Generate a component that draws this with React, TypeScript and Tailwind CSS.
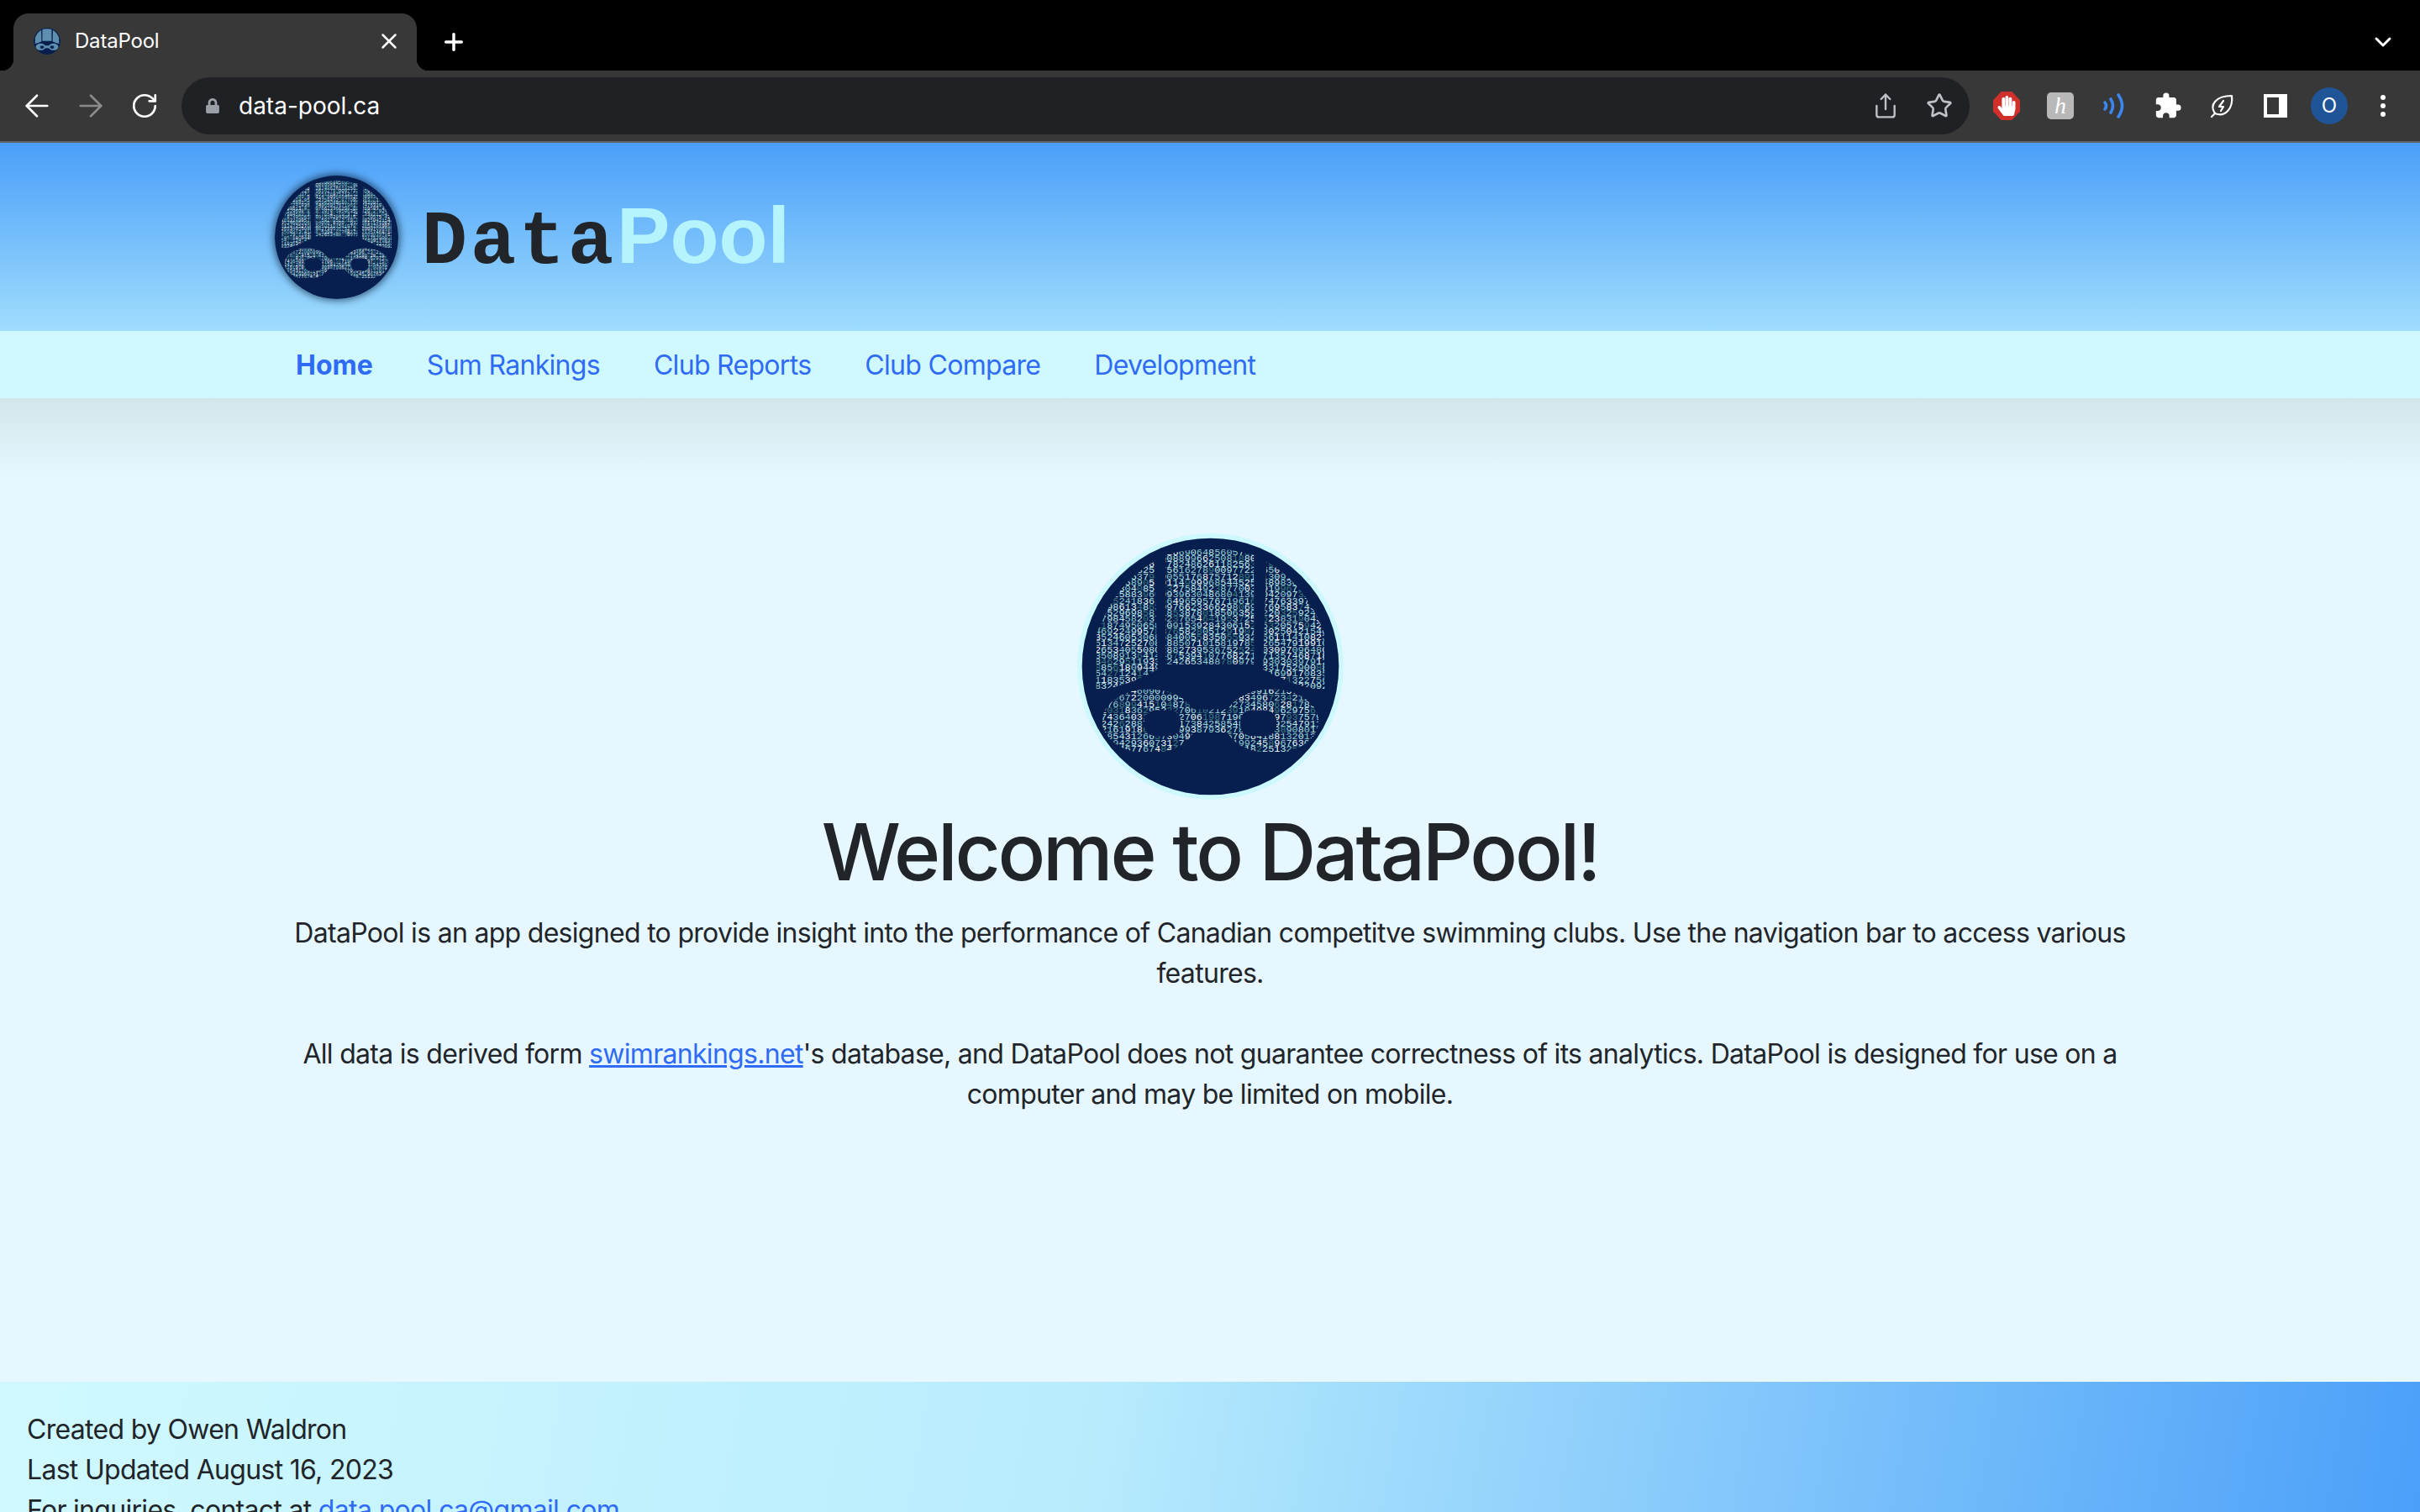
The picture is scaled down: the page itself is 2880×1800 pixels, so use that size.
import { ArrowLeft, ArrowRight, ChevronDown, Plus, RotateCw, Share, Star, X } from "lucide-react";
import { FaHandPaper, FaLock } from "react-icons/fa";
import { MdExtension } from "react-icons/md";

// digits of the logo, laid out on a fixed grid (units are 3x of the full size logo)
const COLORS = ["#f2ffff", "#bfeaea", "#93cfd1", "#3f7a80"];

function makeRows(top: number, step: number, count: number, seed: number) {
  let s = seed;
  const next = () => {
    s = (s * 1664525 + 1013904223) % 4294967296;
    return s / 4294967296;
  };
  const rows = [];
  for (let r = 0; r < count; r++) {
    const cells = [];
    for (let c = 0; c < 39; c++) {
      const v = next();
      const fill = v < 0.14 ? COLORS[0] : v < 0.55 ? COLORS[1] : v < 0.88 ? COLORS[2] : COLORS[3];
      cells.push({ d: String(Math.floor(next() * 10)), fill });
    }
    rows.push({ y: top + r * step, cells });
  }
  return rows;
}

const domeRows = makeRows(122, 21.7, 23, 77);
const goggleRows = makeRows(618, 23, 10, 1234);

function DigitRows({ rows }: { rows: ReturnType<typeof makeRows> }) {
  return (
    <>
      {rows.map((row) => (
        <text key={row.y} x={128} y={row.y} fontSize={35.5} fontFamily="'Liberation Mono', monospace">
          {row.cells.map((cell, i) => (
            <tspan key={i} fill={cell.fill}>
              {cell.d}
            </tspan>
          ))}
        </text>
      ))}
    </>
  );
}

function Logo({ id, ring = false, digits = true }: { id: string; ring?: boolean; digits?: boolean }) {
  const dome = (
    <>
      <path d="M340 145 Q200 225 135 400 L132 605 Q250 590 352 530 Z" />
      <path d="M380 122 Q540 78 695 122 L695 512 L380 512 Z" />
      <path d="M740 145 Q880 225 945 400 L948 605 Q830 590 728 530 Z" />
    </>
  );
  const goggles = (
    <>
      <ellipse cx={322} cy={715} rx={168} ry={115} />
      <ellipse cx={758} cy={715} rx={168} ry={115} />
      <rect x={430} y={672} width={220} height={86} />
    </>
  );
  return (
    <svg viewBox={ring ? "65 45 950 950" : "82 62 916 916"} className="block h-full w-full">
      <defs>
        <clipPath id={`${id}-dome`}>{dome}</clipPath>
        <clipPath id={`${id}-goggles`}>{goggles}</clipPath>
      </defs>
      {ring && <circle cx={540} cy={520} r={475} fill="#ccf9ff" />}
      <circle cx={540} cy={520} r={458} fill="#071f4e" />
      {digits ? (
        <>
          <g clipPath={`url(#${id}-dome)`}>
            <DigitRows rows={domeRows} />
          </g>
          <g clipPath={`url(#${id}-goggles)`}>
            <DigitRows rows={goggleRows} />
          </g>
        </>
      ) : (
        <g fill="#5f8fae">
          {dome}
          {goggles}
        </g>
      )}
      <rect x={304} y={676} width={130} height={92} rx={40} fill="#071f4e" />
      <rect x={646} y={676} width={130} height={92} rx={40} fill="#071f4e" />
    </svg>
  );
}

function ToolButton({ children }: { children: React.ReactNode }) {
  return <div className="flex h-[64px] w-[64px] shrink-0 items-center justify-center">{children}</div>;
}

function BrowserChrome() {
  return (
    <div className="shrink-0 bg-black">
      {/* tab strip */}
      <div className="flex h-[84px] items-end pl-[16px]">
        <div className="relative flex h-[68px] w-[480px] items-center rounded-t-[18px] bg-[#383838] pb-[2px] pl-[24px] pr-[18px]">
          <span className="absolute bottom-0 left-[-14px] h-[14px] w-[14px] bg-[radial-gradient(circle_at_0_0,#000_14px,#383838_14.5px)]" />
          <span className="absolute bottom-0 right-[-14px] h-[14px] w-[14px] bg-[radial-gradient(circle_at_100%_0,#000_14px,#383838_14.5px)]" />
          <div className="h-[32px] w-[32px] overflow-hidden rounded-full">
            <Logo id="fav" digits={false} />
          </div>
          <span className="ml-[17px] text-[24px] leading-[32px] tracking-[-0.2px] text-white">DataPool</span>
          <X className="ml-auto text-white" size={30} strokeWidth={2} />
        </div>
        <div className="flex h-[68px] w-[88px] items-center justify-center">
          <Plus className="text-white" size={32} strokeWidth={2.6} />
        </div>
        <div className="ml-auto flex h-[68px] items-center pr-[28px]">
          <ChevronDown className="text-white" size={32} strokeWidth={2.2} />
        </div>
      </div>
      {/* toolbar */}
      <div className="flex h-[86px] items-start border-b-2 border-[#5f6368] bg-[#383838] px-[12px] pt-[8px]">
        <div className="flex h-[68px] items-center">
          <ToolButton>
            <ArrowLeft className="text-white" size={42} strokeWidth={1.5} />
          </ToolButton>
          <ToolButton>
            <ArrowRight className="text-[#8a8b8d]" size={42} strokeWidth={1.5} />
          </ToolButton>
          <ToolButton>
            <RotateCw className="text-white" size={34} strokeWidth={1.9} />
          </ToolButton>
        </div>
        <div className="ml-[12px] flex h-[68px] flex-1 items-center rounded-full bg-[#202124] pl-[28px] pr-[4px]">
          <FaLock className="text-[#9aa0a6]" size={18} />
          <span className="ml-[22px] text-[28px] leading-[36px] text-white">data-pool.ca</span>
          <div className="ml-auto flex">
            <ToolButton>
              <Share className="text-[#bdc1c6]" size={32} strokeWidth={1.8} />
            </ToolButton>
            <ToolButton>
              <Star className="text-[#bdc1c6]" size={32} strokeWidth={2} />
            </ToolButton>
          </div>
        </div>
        <div className="ml-[12px] flex h-[68px] items-center">
          <ToolButton>
            <div className="flex h-[34px] w-[32px] items-center justify-center bg-[#d0302a] [clip-path:polygon(30%_0,70%_0,100%_30%,100%_70%,70%_100%,30%_100%,0_70%,0_30%)]">
              <FaHandPaper className="text-white" size={24} />
            </div>
          </ToolButton>
          <ToolButton>
            <div className="flex h-[32px] w-[32px] items-center justify-center rounded-[5px] bg-[#b8b8b8] font-['Liberation_Serif',serif] text-[28px] italic leading-none text-white">
              h
            </div>
          </ToolButton>
          <ToolButton>
            <svg width="28" height="30" viewBox="0 0 28 30" fill="none" stroke="#3b86f0" strokeWidth="3.600" strokeLinecap="round">
              <path d="M3 11 Q6 15 3 19" />
              <path d="M10 7 Q15 15 10 23" />
              <path d="M19 2 Q28 15 19 28" />
            </svg>
          </ToolButton>
          <ToolButton>
            <MdExtension className="text-white" size={34} />
          </ToolButton>
          <ToolButton>
            <svg width="30" height="30" viewBox="0 0 30 30" fill="none" stroke="white" strokeWidth="2.200" strokeLinejoin="round" strokeLinecap="round">
              <path d="M7 24 C0 14 8 3 27 3 C29 18 19 29 7 24 Z" />
              <path d="M7 24 L3 28" />
              <path d="M17 9 L12 16 H17 L14 21" />
            </svg>
          </ToolButton>
          <ToolButton>
            <div className="flex h-[28px] w-[28px] bg-white p-[4px] pr-[10px]">
              <div className="h-full w-full bg-[#383838]" />
            </div>
          </ToolButton>
          <ToolButton>
            <div className="flex h-[44px] w-[44px] items-center justify-center rounded-full bg-[#1f5496] text-[24px] text-white">O</div>
          </ToolButton>
          <ToolButton>
            <div className="flex flex-col gap-[4px]">
              <span className="h-[6px] w-[6px] rounded-full bg-white" />
              <span className="h-[6px] w-[6px] rounded-full bg-white" />
              <span className="h-[6px] w-[6px] rounded-full bg-white" />
            </div>
          </ToolButton>
        </div>
      </div>
    </div>
  );
}

const navLinks = ["Sum Rankings", "Club Reports", "Club Compare", "Development"];

export default function App() {
  return (
    <div className="flex h-[1800px] flex-col overflow-hidden bg-[#e6f7ff] font-[Inter,sans-serif] text-[#212529]">
      <BrowserChrome />

      {/* site header */}
      <header className="flex h-[224px] shrink-0 items-center gap-[28px] bg-[linear-gradient(#4a9ff9,#a0ddfd)] pl-[327px]">
        <div className="h-[147px] w-[147px] rounded-full shadow-[0_0_8px_2px_rgba(0,20,40,0.6)]">
          <Logo id="head" />
        </div>
        <div className="flex items-baseline pt-[3px] font-bold leading-none">
          <span className="font-['Liberation_Mono',monospace] text-[90px] tracking-[4px] text-[#212529]">Data</span>
          <span className="font-['Liberation_Sans',sans-serif] text-[95px] text-[#b5f3fd]">Pool</span>
        </div>
      </header>

      {/* nav */}
      <nav className="flex h-[80px] shrink-0 items-center bg-[#d0f9ff] pl-[320px] pt-[2px] text-[32px] leading-[48px] tracking-[-0.7px] text-[#2f6bf5]">
        <a className="px-[32px] font-bold tracking-normal">Home</a>
        {navLinks.map((link) => (
          <a key={link} className="px-[32px]">
            {link}
          </a>
        ))}
      </nav>

      {/* welcome */}
      <main className="flex h-[1171px] shrink-0 flex-col items-center bg-[linear-gradient(#d3e6ea,#e6f7ff_96px)] pt-[161px]">
        <div className="h-[317px] w-[317px]">
          <Logo id="main" ring />
        </div>
        <h1 className="mt-[14px] text-[94px] font-medium leading-[96px] tracking-[-3.2px]">Welcome to DataPool!</h1>
        <div className="mt-[25px] w-[2240px] text-center text-[32px] leading-[48px] tracking-[-0.7px]">
          <p>
            DataPool is an app designed to provide insight into the performance of Canadian competitve swimming clubs. Use the navigation bar to access various features.
          </p>
          <p className="mt-[48px]">
            All data is derived form <a className="text-[#2f6bf5] underline">swimrankings.net</a>'s database, and DataPool does not guarantee correctness of its analytics. DataPool is designed for use on a computer and may be limited on mobile.
          </p>
        </div>
      </main>

      <footer className="h-[208px] shrink-0 bg-[linear-gradient(100deg,#d0f9ff,#b8ecfd_45%,#4a9ff9)] px-[32px] pt-[33px] text-[32px] leading-[48px] tracking-[-0.7px]">
        <p>Created by Owen Waldron</p>
        <p>Last Updated August 16, 2023</p>
        <p>
          For inquiries, contact at <a className="text-[#2f6bf5] underline">data.pool.ca@gmail.com</a>
        </p>
      </footer>
    </div>
  );
}
